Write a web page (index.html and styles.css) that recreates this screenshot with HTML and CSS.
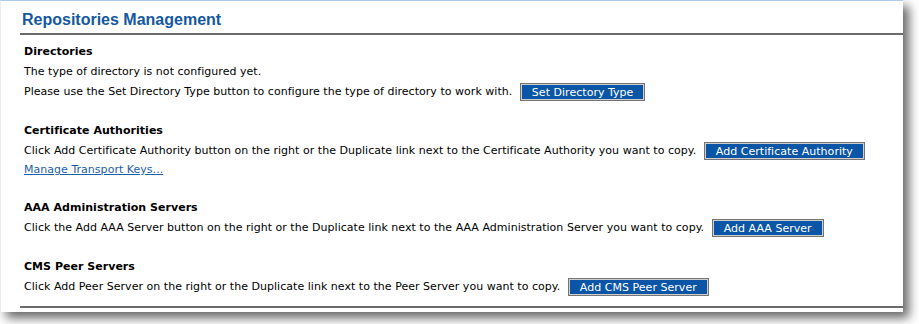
FILE: index.html
```html
<!DOCTYPE html>
<html lang="en">
<head>
  <meta charset="UTF-8" />
  <title>Repositories Management</title>
  <link rel="stylesheet" href="styles.css">
</head>
<body>
  <div class="panel">
    <h1>Repositories Management</h1>
    <div class="content">
      <div class="section">
        <h3>Directories</h3>
        <p>The type of directory is not configured yet.</p>
        <p>Please use the Set Directory Type button to configure the type of directory to work with. <button>Set Directory Type</button></p>
      </div>
      <div class="section">
        <h3>Certificate Authorities</h3>
        <p>Click Add Certificate Authority button on the right or the Duplicate link next to the Certificate Authority you want to copy. <button>Add Certificate Authority</button></p>
        <p class="link-row"><a href="#">Manage Transport Keys...</a></p>
      </div>
      <div class="section">
        <h3>AAA Administration Servers</h3>
        <p>Click the Add AAA Server button on the right or the Duplicate link next to the AAA Administration Server you want to copy. <button>Add AAA Server</button></p>
      </div>
      <div class="section">
        <h3>CMS Peer Servers</h3>
        <p>Click Add Peer Server on the right or the Duplicate link next to the Peer Server you want to copy. <button>Add CMS Peer Server</button></p>
      </div>
    </div>
  </div>
</body>
</html>
```

FILE: styles.css
```css
body {
  margin: 0;
  min-height: 324px;
  background: #fff;
  font-family: "DejaVu Sans", Verdana, sans-serif;
  font-size: 11px;
  letter-spacing: 0.03px;
  color: #000;
}
.panel {
  width: 903px;
  height: 312px;
  box-sizing: border-box;
  background: #fff;
  border-top: 1px solid #a9cdea;
  border-left: 1px solid #ececec;
  box-shadow: 6px 6px 10px rgba(0, 0, 0, 0.6);
  padding-left: 19px;
}
h1 {
  font-family: "Liberation Sans", Arial, sans-serif;
  font-size: 16px;
  line-height: 18px;
  letter-spacing: 0;
  font-weight: bold;
  color: #14589f;
  margin: 0;
  padding: 10px 0 4px 2px;
  border-bottom: 2px solid #6b6b6b;
}
.content {
  height: 273px;
  box-sizing: border-box;
  padding: 8px 0 0 4px;
  border-bottom: 2px solid #6b6b6b;
}
.section {
  margin-bottom: 20px;
}
h3 {
  font-size: 11px;
  line-height: 18px;
  font-weight: bold;
  margin: 0 0 1px;
}
p {
  margin: 0;
  line-height: 20px;
}
.link-row {
  line-height: 18px;
}
a {
  color: #1d5ea8;
}
button {
  font-family: "DejaVu Sans", Verdana, sans-serif;
  font-size: 11px;
  letter-spacing: 0.03px;
  color: #fff;
  background: #0a55a5;
  border: 1px solid #747474;
  box-shadow: inset 0 0 0 1px #cfcfcf;
  padding: 0 11px;
  height: 18px;
  margin-left: 4px;
  vertical-align: middle;
}
```
